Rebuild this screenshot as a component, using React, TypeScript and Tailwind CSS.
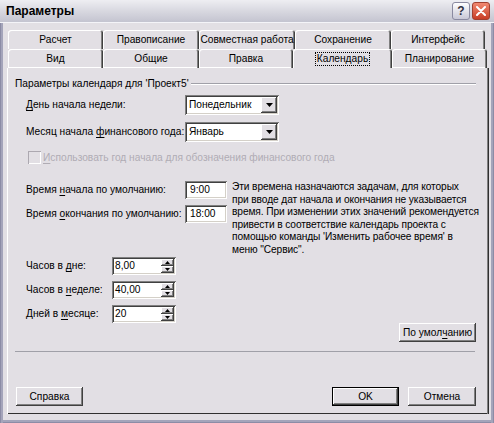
import React from "react";

const raised =
  "shadow-[inset_-1px_-1px_0_#404040,inset_1px_1px_0_#ffffff,inset_-2px_-2px_0_#808080]";
const sunken =
  "shadow-[inset_1px_1px_0_#808080,inset_-1px_-1px_0_#ffffff,inset_2px_2px_0_#404040,inset_-2px_-2px_0_#d4d0c8]";

type TabDef = { label: string; w: string; active?: boolean };

const backRow: TabDef[] = [
  { label: "Расчет", w: "w-[95px]" },
  { label: "Правописание", w: "w-[96px]" },
  { label: "Совместная работа", w: "w-[96px]" },
  { label: "Сохранение", w: "w-[96px]" },
  { label: "Интерфейс", w: "w-[94px]" },
];

const frontRow: TabDef[] = [
  { label: "Вид", w: "w-[95px]" },
  { label: "Общие", w: "w-[96px]" },
  { label: "Правка", w: "w-[94px]" },
  { label: "Календарь", w: "w-[99px]", active: true },
  { label: "Планирование", w: "w-[95px]" },
];

function Tab({ t, front }: { t: TabDef; front?: boolean }) {
  const edge = t.active
    ? "shadow-[inset_1px_1px_0_#ffffff,inset_-1px_0_0_#404040,inset_-2px_0_0_#808080]"
    : front
    ? "shadow-[inset_1px_1px_0_#ffffff,inset_-1px_0_0_#404040,inset_-2px_0_0_#808080,inset_0_-1px_0_#ffffff]"
    : "shadow-[inset_1px_1px_0_#ffffff,inset_-1px_0_0_#404040,inset_-2px_0_0_#808080]";
  return (
    <div
      className={`${t.w} h-[19px] shrink-0 flex items-center justify-center rounded-t-[3px] whitespace-nowrap ${edge}`}
    >
      {t.active ? (
        <span className="outline outline-1 outline-dotted outline-black px-[1px] leading-[12px]">
          {t.label}
        </span>
      ) : (
        <span className="leading-[12px]">{t.label}</span>
      )}
    </div>
  );
}

function U({ children }: { children: React.ReactNode }) {
  return <span className="underline underline-offset-2">{children}</span>;
}

function DownArrow() {
  return (
    <svg width="7" height="4" viewBox="0 0 7 4">
      <polygon points="0,0 7,0 3.5,4" fill="#000" />
    </svg>
  );
}

function Select({ value }: { value: string }) {
  return (
    <div className={`w-[94px] h-[20px] bg-white flex items-stretch p-[2px] ${sunken}`}>
      <div className="flex-1 flex items-center pl-[2px] leading-[12px]">{value}</div>
      <div className={`w-[16px] bg-[#e2dfe4] flex items-center justify-center ${raised}`}>
        <DownArrow />
      </div>
    </div>
  );
}

function TimeBox({ value }: { value: string }) {
  return (
    <div className={`w-[42px] h-[18px] bg-white flex items-center pl-[5px] leading-[12px] ${sunken}`}>
      {value}
    </div>
  );
}

function Spin({ value }: { value: string }) {
  return (
    <div className={`w-[64px] h-[18px] bg-white flex items-stretch p-[2px] ${sunken}`}>
      <div className="flex-1 flex items-center pl-[1px] leading-[12px]">{value}</div>
      <div className="w-[13px] flex flex-col">
        <div className={`flex-1 bg-[#e2dfe4] flex items-center justify-center ${raised}`}>
          <svg width="5" height="3" viewBox="0 0 5 3">
            <polygon points="2.5,0 5,3 0,3" fill="#000" />
          </svg>
        </div>
        <div className={`flex-1 bg-[#e2dfe4] flex items-center justify-center ${raised}`}>
          <svg width="5" height="3" viewBox="0 0 5 3">
            <polygon points="0,0 5,0 2.5,3" fill="#000" />
          </svg>
        </div>
      </div>
    </div>
  );
}

function Button({
  children,
  w,
  def,
}: {
  children: React.ReactNode;
  w: string;
  def?: boolean;
}) {
  return (
    <div
      className={`${w} h-[19px] flex items-center justify-center leading-[12px] ${
        def ? "border border-black" : ""
      } ${raised}`}
    >
      {children}
    </div>
  );
}

export default function App() {
  return (
    <div
      className="w-[494px] h-[423px] bg-[#e2dfe4] text-black text-[10.2px] whitespace-nowrap flex flex-col overflow-hidden shadow-[inset_1px_0_0_#8c8ca6,inset_-1px_0_0_#8c8ca6,inset_3px_0_0_#a4a4ba,inset_-3px_0_0_#a4a4ba,inset_0_-1px_0_#8c8ca6,inset_0_-3px_0_#a4a4ba]"
      style={{ fontFamily: '"Liberation Sans", Arial, sans-serif' }}
    >
      {/* title bar */}
      <div className="h-[23px] shrink-0 flex items-center pl-[6px] pr-[4px] bg-gradient-to-b from-[#eeeef2] via-[#d8d8e0] to-[#c4c4d0] border-b border-[#f4f4f8]">
        <div className="flex-1 font-bold text-[12px] leading-[14px]">Параметры</div>
        <div className="flex gap-[2px]">
          <div className="w-[18px] h-[18px] rounded-[3px] border border-[#8a8aa0] bg-gradient-to-b from-[#ffffff] to-[#c8c8d6] flex items-center justify-center text-[12px] font-bold text-[#303040] leading-none">
            ?
          </div>
          <div className="w-[18px] h-[18px] rounded-[3px] border border-[#a04030] bg-gradient-to-b from-[#f08870] to-[#c83c24] flex items-center justify-center">
            <svg width="10" height="10" viewBox="0 0 10 10">
              <path d="M1 1 L9 9 M9 1 L1 9" stroke="#fff" strokeWidth="2" strokeLinecap="round" />
            </svg>
          </div>
        </div>
      </div>

      {/* tabs */}
      <div className="mt-[7px] flex flex-col pl-[8px]">
        <div className="flex">
          {backRow.map((t) => (
            <Tab key={t.label} t={t} />
          ))}
        </div>
        <div className="flex">
          {frontRow.map((t) => (
            <Tab key={t.label} t={t} front />
          ))}
        </div>
      </div>

      {/* tab page */}
      <div className="ml-[7px] w-[482px] h-[346px] shrink-0 flex flex-col border-l border-white shadow-[inset_-1px_0_0_#303030,inset_-2px_0_0_#808080,inset_0_-1px_0_#303030]">
        <div className="mt-[10px] ml-[7px] mr-[13px] h-[12px] flex items-center gap-[2px]">
          <span className="leading-[12px]">Параметры календаря для 'Проект5'</span>
          <div className="flex-1 h-[2px] border-t border-[#a0a0a8] border-b border-b-white" />
        </div>

        <div className="mt-[5px] ml-[18px] flex items-center">
          <div className="w-[159px]">
            <U>Д</U>ень начала недели:
          </div>
          <Select value="Понедельник" />
        </div>

        <div className="mt-[7px] ml-[18px] flex items-center">
          <div className="w-[159px]">
            Месяц начала <U>ф</U>инансового года:
          </div>
          <Select value="Январь" />
        </div>

        <div className="mt-[9px] ml-[20px] h-[13px] flex items-center gap-[2px] text-[#b0acb4]">
          <div className="w-[13px] h-[13px] bg-[#e2dfe4] shadow-[inset_1px_1px_0_#aca8b0,inset_-1px_-1px_0_#ffffff]" />
          <span>
            <U>И</U>спользовать год начала для обозначения финансового года
          </span>
        </div>

        <div className="mt-[17px] ml-[18px] h-[76px] flex items-start">
          <div className="flex flex-col gap-[6px]">
            <div className="flex items-center">
              <div className="w-[159px]">
                Время <U>н</U>ачала по умолчанию:
              </div>
              <TimeBox value="9:00" />
            </div>
            <div className="flex items-center">
              <div className="w-[159px]">
                Время <U>о</U>кончания по умолчанию:
              </div>
              <TimeBox value="18:00" />
            </div>
          </div>
          <p className="ml-[5px] leading-[12.6px] tracking-[-0.1px]">
            Эти времена назначаются задачам, для которых
            <br />
            при вводе дат начала и окончания не указывается
            <br />
            время. При изменении этих значений рекомендуется
            <br />
            привести в соответствие календарь проекта с
            <br />
            помощью команды 'Изменить рабочее время' в
            <br />
            меню "Сервис".
          </p>
        </div>

        <div className="ml-[18px] flex flex-col gap-[6px]">
          <div className="flex items-center">
            <div className="w-[86px]">
              Часов в <U>д</U>не:
            </div>
            <Spin value="8,00" />
          </div>
          <div className="flex items-center">
            <div className="w-[86px]">
              Часов в <U>н</U>еделе:
            </div>
            <Spin value="40,00" />
          </div>
          <div className="flex items-center">
            <div className="w-[86px]">
              Дней в <U>м</U>есяце:
            </div>
            <Spin value="20" />
          </div>
        </div>

        <div className="self-end mr-[13px]">
          <Button w="w-[77px]">
            По умол<U>ч</U>анию
          </Button>
        </div>

        <div className="mt-[9px] ml-[7px] mr-[14px] h-[1px] bg-[#a0a0a8]" />

        <div className="mt-[35px] flex items-center">
          <div className="ml-[8px]">
            <Button w="w-[67px]">Справка</Button>
          </div>
          <div className="flex-1" />
          <Button w="w-[67px]" def>
            OK
          </Button>
          <div className="ml-[9px] mr-[13px]">
            <Button w="w-[68px]">Отмена</Button>
          </div>
        </div>
      </div>
    </div>
  );
}
